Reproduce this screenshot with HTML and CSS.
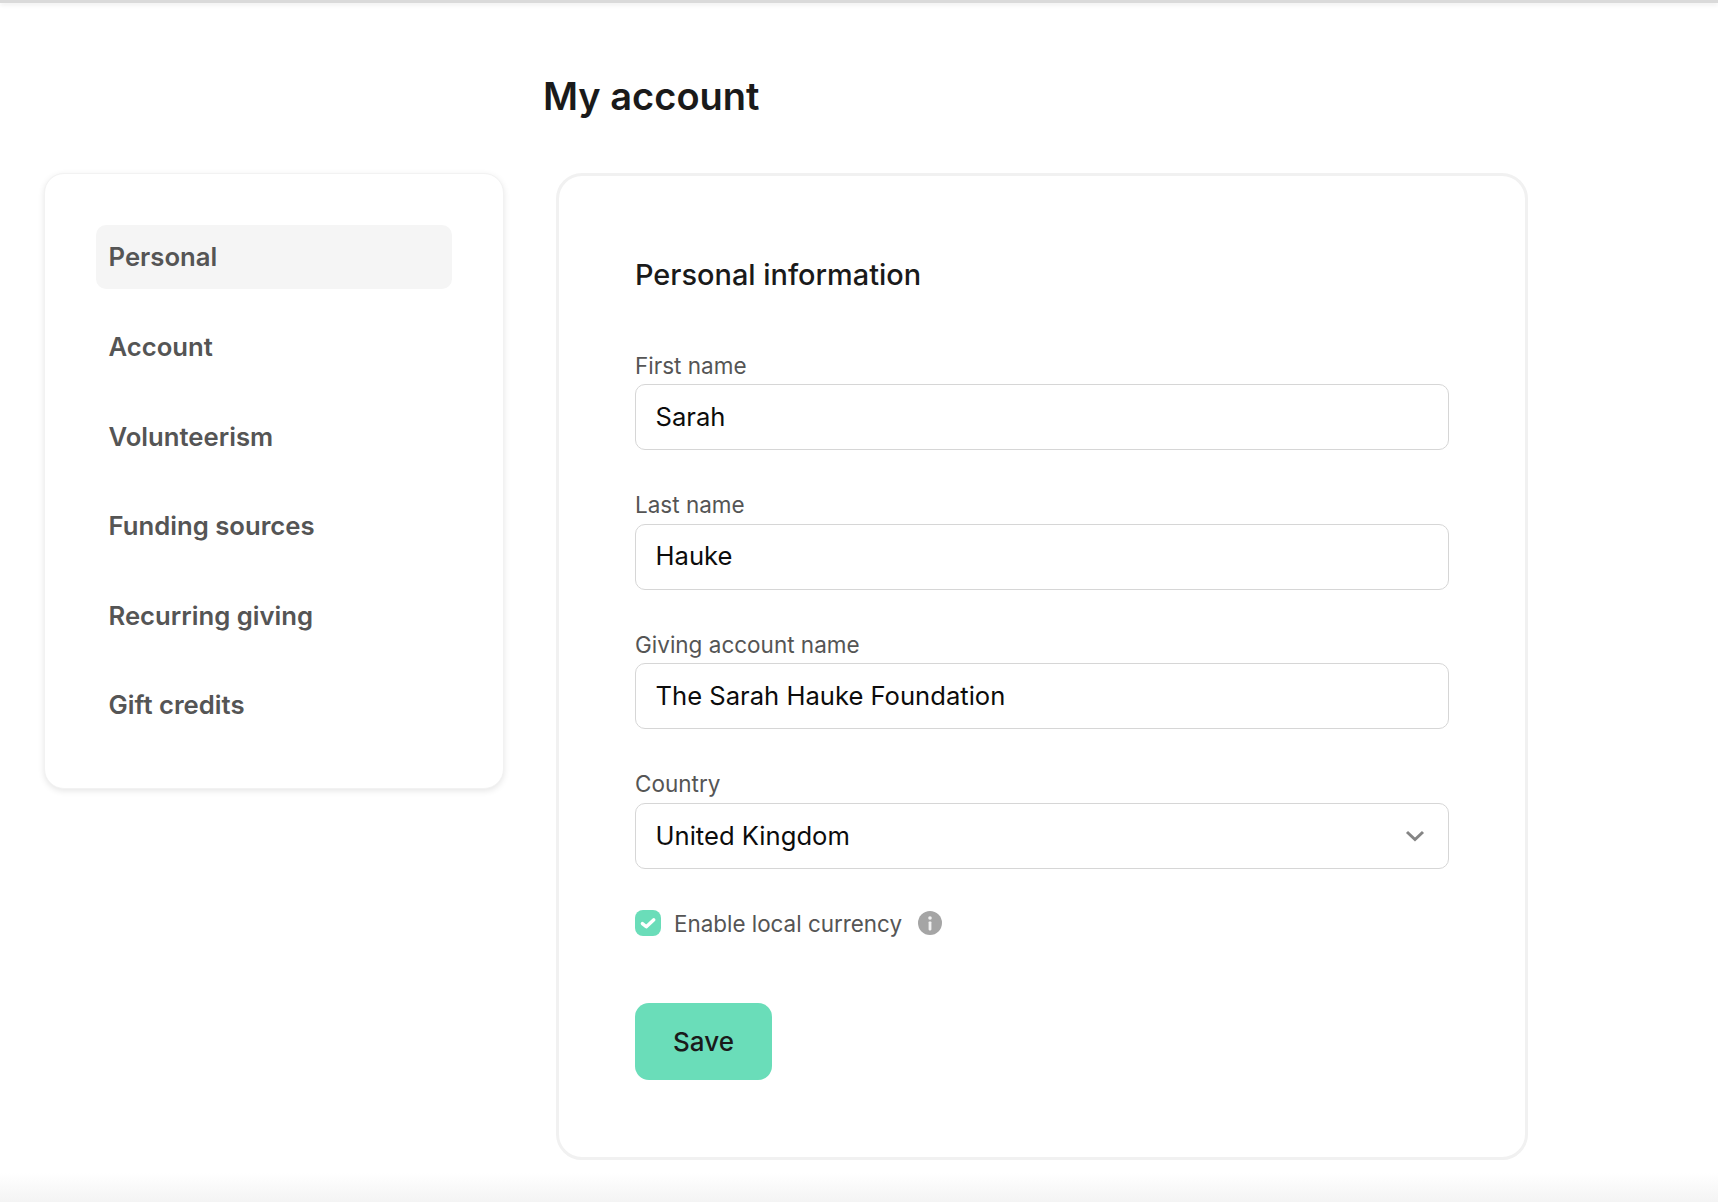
FILE: index.html
```html
<!DOCTYPE html>
<html lang="en">
<head>
<meta charset="utf-8">
<title>My account</title>
<link rel="stylesheet" href="styles.css">
</head>
<body>
<div class="topline"></div>
<div class="page">
  <h1 class="title">My account</h1>
  <div class="columns">
    <nav class="side">
      <a class="side-item active">Personal</a>
      <a class="side-item">Account</a>
      <a class="side-item">Volunteerism</a>
      <a class="side-item">Funding sources</a>
      <a class="side-item">Recurring giving</a>
      <a class="side-item">Gift credits</a>
    </nav>
    <main class="panel">
      <h2 class="panel-title">Personal information</h2>
      <div class="field">
        <label class="field-label">First name</label>
        <div class="input">Sarah</div>
      </div>
      <div class="field">
        <label class="field-label">Last name</label>
        <div class="input">Hauke</div>
      </div>
      <div class="field">
        <label class="field-label">Giving account name</label>
        <div class="input">The Sarah Hauke Foundation</div>
      </div>
      <div class="field">
        <label class="field-label">Country</label>
        <div class="input select">
          <span>United Kingdom</span>
          <svg class="chevron" viewBox="0 0 20 12" aria-hidden="true"><path d="M2 2l8 7.5L18 2" fill="none" stroke="#858585" stroke-width="3"/></svg>
        </div>
      </div>
      <div class="check-row">
        <span class="checkbox">
          <svg viewBox="0 0 26 26" aria-hidden="true"><path d="M7.4 13.6l3.9 3.2 7.5-7" fill="none" stroke="#fff" stroke-width="3.4" stroke-linecap="round" stroke-linejoin="round"/></svg>
        </span>
        <span class="check-label">Enable local currency</span>
        <svg class="info" viewBox="0 0 24 24" aria-hidden="true"><circle cx="12" cy="12" r="12" fill="#a5a5a5"/><circle cx="12" cy="7" r="1.8" fill="#f2f2f2"/><rect x="10.6" y="10.4" width="2.8" height="9" rx=".8" fill="#f2f2f2"/></svg>
      </div>
      <button class="save" type="button">Save</button>
    </main>
  </div>
</div>
<div class="bottom-fade"></div>
</body>
</html>
```
FILE: styles.css
```css
* { box-sizing: border-box; }
html, body { margin: 0; height: 100%; }
body {
  position: relative;
  width: 1718px;
  height: 1202px;
  overflow: hidden;
  background: #fff;
  font-family: Inter, "Liberation Sans", sans-serif;
  color: #1a1a1a;
}
.topline {
  height: 3px;
  background: #dadada;
  box-shadow: 0 2px 4px rgba(0,0,0,.08);
}
.page { padding: 0 0 0 44px; }
.title {
  margin: 66.1px 0 0 499px;
  height: 54px;
  font-size: 38px;
  line-height: 54px;
  font-weight: 560;
  color: #1a1a1a;
}
.columns {
  display: flex;
  align-items: flex-start;
  gap: 52px;
  margin-top: 49.9px;
}
.side {
  width: 460px;
  height: 616px;
  padding: 51px;
  display: flex;
  flex-direction: column;
  gap: 25.6px;
  background: #fff;
  border: 1px solid #f2f2f2;
  border-radius: 20px;
  box-shadow: 0 2px 6px rgba(0,0,0,.1);
}
.side-item {
  flex: none;
  height: 64px;
  padding-left: 12.5px;
  display: flex;
  align-items: center;
  font-size: 25.7px;
  font-weight: 600;
  color: #555;
  border-radius: 10px;
}
.side-item.active { background: #f5f5f5; }
.panel {
  position: relative;
  z-index: 1;
  width: 972px;
  height: 987px;
  padding: 76px 76px 0;
  background: #fff;
  border: 3px solid #f1f1f1;
  border-radius: 26px;
}
.panel-title {
  margin: 0;
  height: 46px;
  font-size: 28.9px;
  line-height: 46px;
  font-weight: 500;
  color: #1a1a1a;
}
.field { display: flex; flex-direction: column; margin-bottom: 38px; }
.panel-title + .field { margin-top: 51px; }
.field-label {
  height: 35.5px;
  font-size: 22.5px;
  line-height: 34px;
  color: #555;
}
.input {
  height: 66px;
  padding: 0 19.5px 2px;
  display: flex;
  align-items: center;
  border: 1.5px solid #d6d6d6;
  border-radius: 10px;
  font-size: 25.6px;
  color: #0c0c0c;
}
.select { justify-content: space-between; padding-bottom: 0; }
.chevron { width: 20px; height: 12px; margin: 0 4px 0 0; }
.check-row {
  display: flex;
  align-items: center;
  height: 26px;
  margin-top: 41.3px;
  font-size: 22.4px;
  color: #555;
}
.checkbox {
  width: 26px;
  height: 26px;
  border-radius: 8px;
  background: #6addb9;
}
.checkbox svg { display: block; width: 26px; height: 26px; }
.check-label { margin-left: 13px; }
.info { width: 24px; height: 24px; margin-left: 16px; }
.save {
  display: block;
  width: 137px;
  height: 77px;
  margin-top: 67px;
  padding: 0;
  border: 0;
  border-radius: 14px;
  background: #6addb9;
  font-family: inherit;
  font-size: 26px;
  font-weight: 500;
  color: #1a1a1a;
}
.bottom-fade {
  position: absolute;
  left: 0;
  right: 0;
  bottom: 0;
  height: 42px;
  background: linear-gradient(#fff 30%, #f4f4f4);
}
```
